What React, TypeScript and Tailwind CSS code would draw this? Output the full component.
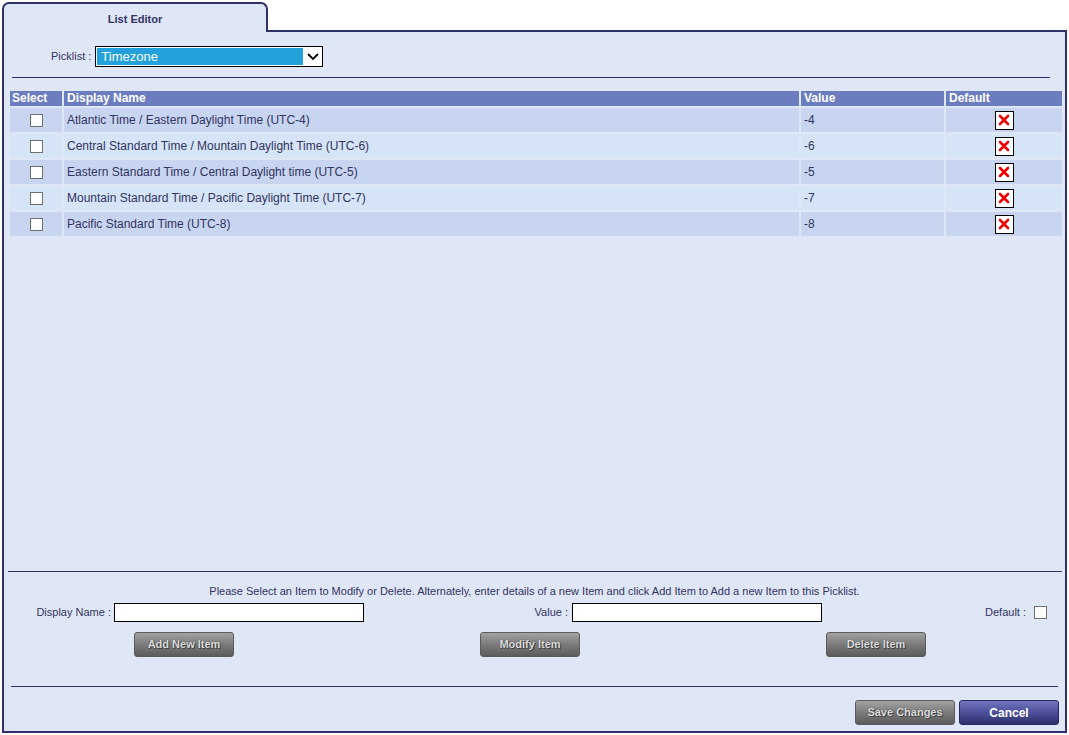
import type { ReactNode } from 'react';

const rows = [
  { name: 'Atlantic Time / Eastern Daylight Time (UTC-4)', value: '-4' },
  { name: 'Central Standard Time / Mountain Daylight Time (UTC-6)', value: '-6' },
  { name: 'Eastern Standard Time / Central Daylight time (UTC-5)', value: '-5' },
  { name: 'Mountain Standard Time / Pacific Daylight Time (UTC-7)', value: '-7' },
  { name: 'Pacific Standard Time (UTC-8)', value: '-8' },
];

function Checkbox() {
  return <span className="inline-block w-[13px] h-[13px] bg-white border border-[#6f6f6f] align-middle" />;
}

function RedX() {
  return (
    <span className="inline-flex items-center justify-center w-[19px] h-[19px] bg-white border border-black">
      <svg width="12" height="12" viewBox="0 0 12 12">
        <path d="M2 2 L10 10 M10 2 L2 10" stroke="#f00000" strokeWidth="2.6" strokeLinecap="round" />
      </svg>
    </span>
  );
}

function GrayButton({ children }: { children: ReactNode }) {
  return (
    <button className="w-[100px] h-[25px] rounded-[3px] border border-[#5a5a5a] bg-linear-to-b from-[#a3a3a3] via-[#7b7b7b] to-[#5c5c5c] text-[11px] font-bold text-[#dcdcdc] [text-shadow:0_0_1px_#333,1px_1px_0_#444]">
      {children}
    </button>
  );
}

export default function App() {
  return (
    <div className="w-[1069px] h-[735px] bg-white p-[2px] flex flex-col font-['Liberation_Sans',Arial,sans-serif] text-[#33335f]">
      {/* Tab strip */}
      <div className="flex h-[30px] shrink-0">
        <div className="w-[266px] border-2 border-b-0 border-[#30306a] rounded-t-[7px] bg-[#dfe7f6] flex items-center justify-center pt-[2px]">
          <span className="text-[11px] font-bold text-[#333366]">List Editor</span>
        </div>
        <div className="flex-1 border-b-2 border-[#30306a]" />
      </div>

      {/* Panel */}
      <div className="flex-1 flex flex-col border-2 border-t-0 border-[#30306a] bg-[#dfe7f6]">
        <div className="flex items-center h-[21px] mt-[14px] pl-[47px]">
          <span className="text-[11px] mr-[4px]">Picklist :</span>
          <div className="flex w-[228px] h-[21px] border border-black bg-white">
            <div className="flex-1 m-[1px] mr-0 bg-[#22a1db] text-white text-[13px] leading-[17px] pl-[4px]">Timezone</div>
            <div className="w-[19px] flex items-center justify-center">
              <svg width="12" height="8" viewBox="0 0 12 8">
                <path d="M1 1 L6 6 L11 1" stroke="#000" strokeWidth="1.8" fill="none" />
              </svg>
            </div>
          </div>
        </div>

        <div className="h-px bg-[#30306a] ml-[8px] mr-[15px] mt-[10px]" />

        <table className="border-separate border-spacing-[2px] ml-[4px] mr-[1px] mt-[11px] text-[12px]">
          <thead>
            <tr className="h-[15px] text-white font-bold text-left leading-[15px]">
              <th className="w-[52px] bg-[#6b7dbf] px-[2px] font-bold">Select</th>
              <th className="bg-[#6b7dbf] px-[3px] font-bold">Display Name</th>
              <th className="w-[143px] bg-[#6b7dbf] px-[3px] font-bold">Value</th>
              <th className="w-[116px] bg-[#6b7dbf] px-[3px] font-bold">Default</th>
            </tr>
          </thead>
          <tbody>
            {rows.map((r, i) => (
              <tr key={r.value} className={`h-[24px] ${i % 2 === 0 ? 'bg-[#c7d5f1]' : 'bg-[#d5e4f6]'}`}>
                <td className="text-center">
                  <Checkbox />
                </td>
                <td className="px-[3px]">{r.name}</td>
                <td className="px-[3px]">{r.value}</td>
                <td className="text-center leading-none">
                  <RedX />
                </td>
              </tr>
            ))}
          </tbody>
        </table>

        <div className="flex-1" />

        {/* Item editor */}
        <div className="h-px bg-[#30306a] ml-[4px] mr-[3px]" />
        <p className="text-[11px] text-center mt-[13px] leading-[13px]">
          Please Select an Item to Modify or Delete. Alternately, enter details of a new Item and click Add Item to Add a new Item to this Picklist.
        </p>
        <div className="flex items-center h-[19px] mt-[5px] text-[11px] pl-[7px]">
          <span className="w-[103px] text-right pr-[3px]">Display Name :</span>
          <span className="w-[250px] h-[19px] bg-white border border-black" />
          <span className="w-[208px] text-right pr-[4px]">Value :</span>
          <span className="w-[250px] h-[19px] bg-white border border-black" />
          <span className="w-[212px] text-right pr-[8px]">Default :</span>
          <span className="w-[13px] h-[13px] bg-white border border-[#6f6f6f]" />
        </div>
        <div className="grid grid-cols-3 w-[1038px] ml-[7px] mt-[10px] justify-items-center">
          <GrayButton>Add New Item</GrayButton>
          <GrayButton>Modify Item</GrayButton>
          <GrayButton>Delete Item</GrayButton>
        </div>

        <div className="h-px bg-[#30306a] ml-[7px] mr-[7px] mt-[29px]" />
        <div className="flex justify-end gap-[4px] mt-[13px] mr-[6px] mb-[6px]">
          <GrayButton>Save Changes</GrayButton>
          <button className="w-[100px] h-[25px] rounded-[3px] border border-[#2a2a5e] bg-linear-to-b from-[#7275bd] via-[#4d509a] to-[#2e2f6d] text-[12px] font-bold text-white">
            Cancel
          </button>
        </div>
      </div>
    </div>
  );
}
